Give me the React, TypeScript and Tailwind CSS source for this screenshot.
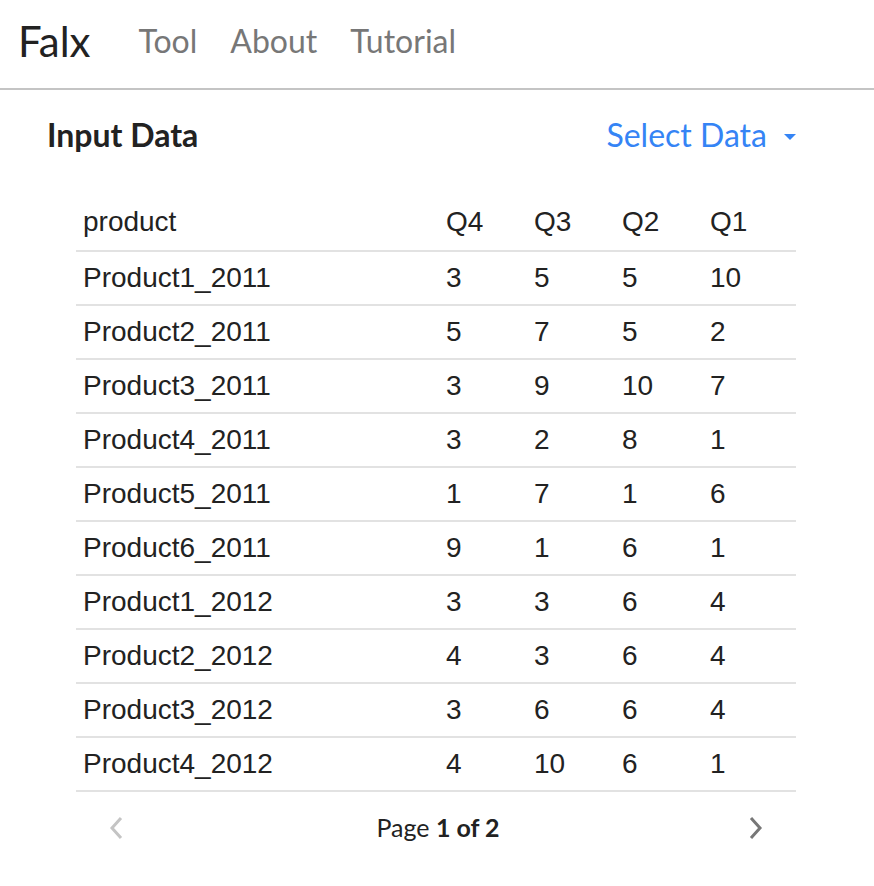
import React from 'react'

const rows: [string, number, number, number, number][] = [
  ['Product1_2011', 3, 5, 5, 10],
  ['Product2_2011', 5, 7, 5, 2],
  ['Product3_2011', 3, 9, 10, 7],
  ['Product4_2011', 3, 2, 8, 1],
  ['Product5_2011', 1, 7, 1, 6],
  ['Product6_2011', 9, 1, 6, 1],
  ['Product1_2012', 3, 3, 6, 4],
  ['Product2_2012', 4, 3, 6, 4],
  ['Product3_2012', 3, 6, 6, 4],
  ['Product4_2012', 4, 10, 6, 1],
]

const cols = 'grid grid-cols-[363px_88px_88px_88px_1fr] items-center'

export default function App() {
  return (
    <div className="w-[874px] h-[886px] bg-white font-['Lato',sans-serif] text-[#222]">
      {/* navbar */}
      <nav className="h-[90px] flex items-center border-b-2 border-[#c4c4c4] pl-[18px] pb-[6px]">
        <span className="text-[42px] text-[#222] mr-[48px]">Falx</span>
        <div className="flex gap-[33px] text-[32px] text-[#777]">
          <span>Tool</span>
          <span>About</span>
          <span>Tutorial</span>
        </div>
      </nav>

      <div className="pl-[47px] pr-[77px]">
        <div className="flex items-center justify-between h-[90px]">
          <h2 className="text-[32px] font-bold">Input Data</h2>
          <button className="flex items-center gap-[16px] text-[32px] text-[#3584f5]">
            Select Data
            <svg width="14" height="8" viewBox="0 0 14 8" className="mt-[4px]">
              <path d="M1 1 L13 1 L7 7 Z" fill="#3584f5" />
            </svg>
          </button>
        </div>
      </div>

      <div className="mt-[18px] ml-[76px] w-[720px] font-['Liberation_Sans',Arial,sans-serif] text-[28px]">
        <div className={`${cols} h-[54px] border-b-2 border-[#e2e2e2] px-[7px] pb-[4px]`}>
          <span>product</span>
          <span>Q4</span>
          <span>Q3</span>
          <span>Q2</span>
          <span>Q1</span>
        </div>
        {rows.map((r) => (
          <div key={r[0]} className={`${cols} h-[54px] border-b-2 border-[#e2e2e2] px-[7px]`}>
            <span>{r[0]}</span>
            <span>{r[1]}</span>
            <span>{r[2]}</span>
            <span>{r[3]}</span>
            <span>{r[4]}</span>
          </div>
        ))}
        <div className="flex items-center justify-between h-[72px] px-[32px]">
          <svg width="16" height="24" viewBox="0 0 16 24">
            <path d="M13 2 L4 12 L13 22" fill="none" stroke="#c4c4c4" strokeWidth="3" />
          </svg>
          <span className="font-['Lato',sans-serif] text-[25px] ml-[4px]">
            Page <b>1 of 2</b>
          </span>
          <svg width="16" height="24" viewBox="0 0 16 24">
            <path d="M3 2 L12 12 L3 22" fill="none" stroke="#777" strokeWidth="3" />
          </svg>
        </div>
      </div>
    </div>
  )
}
